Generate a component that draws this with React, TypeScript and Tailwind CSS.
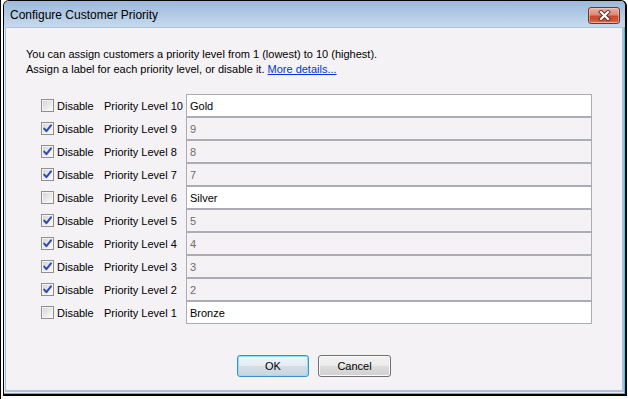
const levels = [
  { n: 10, label: "Gold", disabled: false },
  { n: 9, label: "9", disabled: true },
  { n: 8, label: "8", disabled: true },
  { n: 7, label: "7", disabled: true },
  { n: 6, label: "Silver", disabled: false },
  { n: 5, label: "5", disabled: true },
  { n: 4, label: "4", disabled: true },
  { n: 3, label: "3", disabled: true },
  { n: 2, label: "2", disabled: true },
  { n: 1, label: "Bronze", disabled: false },
]

function Checkbox({ checked }: { checked: boolean }) {
  return (
    <span className="flex size-[13px] shrink-0 border border-[#8f8f8f] bg-[#f4f4f4] p-[1px]">
      <span className="relative flex size-full items-center justify-center bg-[linear-gradient(135deg,#d6d6d6_0%,#e8e8e8_50%,#fbfbfb_100%)]">
        {checked && (
          <svg width="11" height="11" viewBox="0 0 11 11" className="absolute -left-[1px] -top-[1px]">
            <path d="M2.2 5.6 L4.4 8.2 L9 2.4" fill="none" stroke="#3049b0" strokeWidth="2" strokeLinecap="round" strokeLinejoin="round" />
          </svg>
        )}
      </span>
    </span>
  )
}

function CloseButton() {
  return (
    <div className="flex h-[17px] w-[32px] items-center justify-center rounded-[3px] border border-[#7a3328] bg-[linear-gradient(to_bottom,#ebb0a2_0%,#dc8a76_45%,#c54a33_55%,#c9583c_85%,#e08a66_100%)] shadow-[inset_0_0_0_1px_rgba(255,220,210,0.45)]">
      <svg width="13" height="11" viewBox="0 0 13 11">
        <path d="M3 2 L10 9 M10 2 L3 9" stroke="#5e2a22" strokeWidth="4" strokeLinecap="square" />
        <path d="M3 2 L10 9 M10 2 L3 9" stroke="#ffffff" strokeWidth="2.2" strokeLinecap="square" />
      </svg>
    </div>
  )
}

export default function App() {
  return (
    <div className="h-[399px] w-[628px] border-l border-black bg-white font-['Liberation_Sans',Arial,sans-serif]">
      <div className="ml-[2px] flex h-[396px] w-[624px] flex-col overflow-hidden rounded-t-[6px] border-y border-l border-r-2 border-b-2 border-black bg-[#e6eff8]">
        {/* Title bar */}
        <div className="flex h-[26px] shrink-0 items-center justify-between bg-[linear-gradient(to_bottom,#9cb9d9_0%,#afc8e3_45%,#c5daef_100%)] pl-[6px] pr-[5px] pt-[2px]">
          <span className="text-[12px] text-black">Configure Customer Priority</span>
          <CloseButton />
        </div>

        {/* Body */}
        <div className="flex flex-1 flex-col border-b border-r border-[#3fc2ee] pb-[1px] pl-[1px]">
          <div className="flex flex-1 flex-col border-b-2 border-l border-r-2 border-t border-[#a9c2dd] bg-[#f5f2f6] text-[11px] text-black">
            <div className="pl-[20px] pt-[19px] leading-[15px]">
              <p>You can assign customers a priority level from 1 (lowest) to 10 (highest).</p>
              <p>
                Assign a label for each priority level, or disable it.{" "}
                <span className="text-[#0033dd] underline">More details...</span>
              </p>
            </div>

            <div className="mt-[17px] flex flex-col pl-[35px]">
              {levels.map((lv) => (
                <div key={lv.n} className="flex h-[23px] items-center">
                  <Checkbox checked={lv.disabled} />
                  <span className="ml-[3px] w-[47px] pt-[2px]">Disable</span>
                  <span className="w-[82px] pt-[2px]">Priority Level {lv.n}</span>
                  <div
                    className={
                      lv.disabled
                        ? "flex h-[23px] w-[406px] items-center border border-[#acacb4] bg-[#f5f2f6] px-[3px] pt-[2px] text-[#6d6d6d]"
                        : "flex h-[23px] w-[406px] items-center border border-[#acacb4] bg-white px-[3px] pt-[2px] text-black"
                    }
                  >
                    {lv.label}
                  </div>
                </div>
              ))}
            </div>

            <div className="mt-[31px] flex justify-center gap-[9px]">
              <button className="h-[22px] w-[72px] rounded-[3px] border border-[#3c8fc8] bg-[linear-gradient(to_bottom,#eef4f8_0%,#e4ecf2_50%,#d4dee6_52%,#c9d5de_100%)] text-[11px] text-black shadow-[inset_0_0_0_1px_#8fe0f8]">
                OK
              </button>
              <button className="h-[22px] w-[73px] rounded-[3px] border border-[#707070] bg-[linear-gradient(to_bottom,#f2f2f2_0%,#ebebeb_50%,#dddddd_52%,#cfcfcf_100%)] text-[11px] text-black shadow-[inset_0_0_0_1px_#fafafa]">
                Cancel
              </button>
            </div>
          </div>
        </div>
      </div>
    </div>
  )
}
